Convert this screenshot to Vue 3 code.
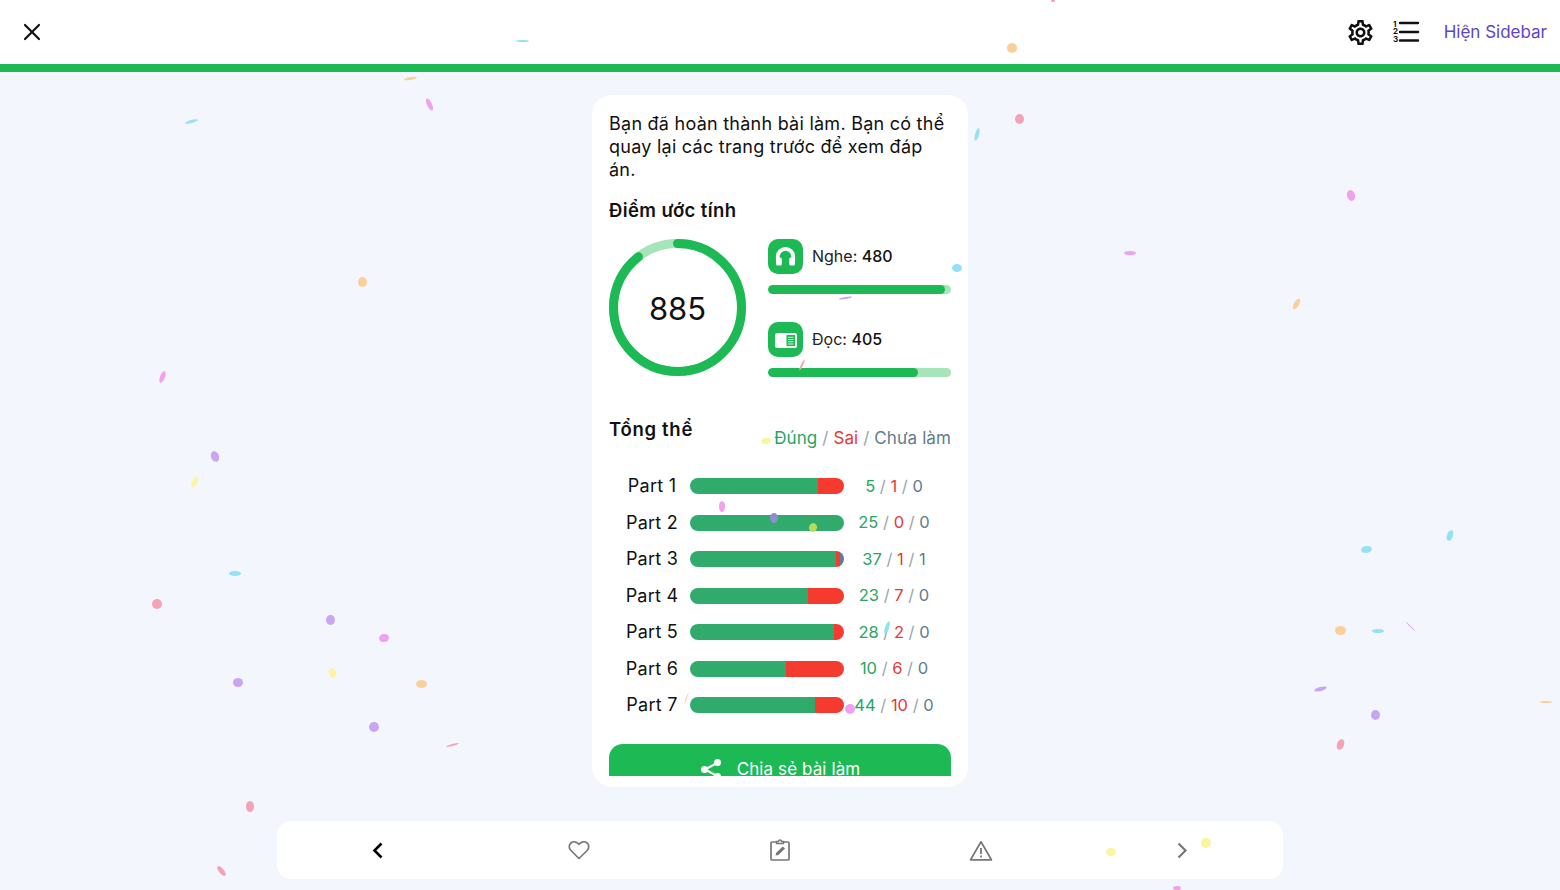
<script setup>
const parts = [
  { name: 'Part 1', c: 5, w: 1, u: 0 },
  { name: 'Part 2', c: 25, w: 0, u: 0 },
  { name: 'Part 3', c: 37, w: 1, u: 1 },
  { name: 'Part 4', c: 23, w: 7, u: 0 },
  { name: 'Part 5', c: 28, w: 2, u: 0 },
  { name: 'Part 6', c: 10, w: 6, u: 0 },
  { name: 'Part 7', c: 44, w: 10, u: 0 }
]
const pct = (v, p) => (v / (p.c + p.w + p.u)) * 100 + '%'

const skills = [
  { label: 'Nghe:', score: 480, icon: 'listen' },
  { label: 'Đọc:', score: 405, icon: 'read' }
]
const circ = 2 * Math.PI * 64
const ringDash = `${circ * (885 / 990)} ${circ}`

const P = '#f5a3b4', V = '#f0a0ee', O = '#fbcf9a', C = '#93e1f5', U = '#c9a5f2', Y = '#fbf59d'
const confetti = [
  [522, 41, 13, 2, 0, C], [1012, 48, 10, 10, 0, O], [1053, 0, 4, 3, 0, P], [410, 78, 13, 3, -10, O],
  [429, 104, 5, 13, -25, V], [191, 121, 13, 3, -15, C], [1019, 119, 9, 10, 0, P], [977, 134, 4, 13, 15, C],
  [1351, 195, 8, 11, -15, V], [1130, 253, 12, 4, 0, V], [957, 268, 10, 8, 0, C], [845, 298, 13, 2, -10, U],
  [362, 282, 9, 10, 0, O], [1296, 304, 5, 12, 30, O], [162, 377, 5, 12, 20, V], [215, 456, 8, 11, -20, U],
  [194, 482, 5, 12, 25, Y], [766, 441, 10, 6, -10, Y], [722, 506, 6, 11, 0, V], [774, 518, 8, 10, 0, '#8f8fd0'],
  [813, 527, 8, 9, 15, '#b5dc5a'], [235, 573, 12, 5, 0, C], [1366, 549, 11, 7, -10, C], [1450, 535, 6, 11, 20, C],
  [157, 604, 10, 10, 0, P], [330, 620, 9, 10, 0, U], [384, 638, 10, 8, -10, V], [1340, 630, 11, 9, 0, O],
  [1378, 631, 12, 4, 0, C], [1410, 626, 13, 1, 45, U], [887, 627, 4, 13, 20, C], [238, 682, 10, 9, 0, U],
  [332, 673, 7, 10, -30, Y], [421, 684, 11, 8, 0, O], [1320, 689, 13, 4, -15, U], [1375, 715, 9, 10, 0, U],
  [1546, 702, 12, 2, 0, O], [374, 727, 10, 10, 0, U], [452, 745, 13, 2, -15, P], [1340, 744, 7, 11, 20, P],
  [850, 709, 10, 10, 0, V], [686, 698, 1, 12, 20, O], [250, 806, 8, 11, 0, P], [221, 871, 5, 12, -40, P],
  [1111, 852, 10, 8, 0, Y], [1206, 843, 10, 10, 0, Y], [1177, 888, 8, 4, 0, V], [802, 365, 2, 12, 25, P]
]
const dotStyle = ([x, y, w, h, r, c]) => ({
  left: x - w / 2 + 'px',
  top: y - h / 2 + 'px',
  width: w + 'px',
  height: h + 'px',
  background: c,
  transform: `rotate(${r}deg)`
})
</script>

<template>
  <div class="page">
    <header class="topbar">
      <button class="icon-btn" aria-label="Đóng">
        <svg width="18" height="18" viewBox="0 0 18 18"><path d="M2 2 16 16M16 2 2 16" stroke="#111" stroke-width="2.2" stroke-linecap="round" fill="none" /></svg>
      </button>
      <div class="top-actions">
        <svg class="gear" width="25" height="25" viewBox="2 2 20 20"><path fill="#111" d="M19.43 12.98c.04-.32.07-.64.07-.98 0-.34-.03-.66-.07-.98l2.11-1.65c.19-.15.24-.42.12-.64l-2-3.46c-.09-.16-.26-.25-.44-.25-.06 0-.12.01-.17.03l-2.49 1c-.52-.4-1.08-.73-1.69-.98l-.38-2.65C14.46 2.18 14.25 2 14 2h-4c-.25 0-.46.18-.49.42l-.38 2.65c-.61.25-1.17.59-1.69.98l-2.49-1c-.06-.02-.12-.03-.18-.03-.17 0-.34.09-.43.25l-2 3.46c-.13.22-.07.49.12.64l2.11 1.65c-.04.32-.07.65-.07.98 0 .33.03.66.07.98l-2.11 1.65c-.19.15-.24.42-.12.64l2 3.46c.09.16.26.25.44.25.06 0 .12-.01.17-.03l2.49-1c.52.4 1.08.73 1.69.98l.38 2.65c.03.24.24.42.49.42h4c.25 0 .46-.18.49-.42l.38-2.65c.61-.25 1.17-.59 1.69-.98l2.49 1c.06.02.12.03.18.03.17 0 .34-.09.43-.25l2-3.46c.12-.22.07-.49-.12-.64l-2.11-1.65zm-1.98-1.71c.04.31.05.52.05.73 0 .21-.02.43-.05.73l-.14 1.13.89.7 1.08.84-.7 1.21-1.27-.51-1.04-.42-.9.68c-.43.32-.84.56-1.25.73l-1.06.43-.16 1.13-.2 1.35h-1.4l-.19-1.35-.16-1.13-1.06-.43c-.43-.18-.83-.41-1.23-.71l-.91-.7-1.06.43-1.27.51-.7-1.21 1.08-.84.89-.7-.14-1.13c-.03-.31-.05-.54-.05-.74s.02-.43.05-.73l.14-1.13-.89-.7-1.08-.84.7-1.21 1.27.51 1.04.42.9-.68c.43-.32.84-.56 1.25-.73l1.06-.43.16-1.13.2-1.35h1.39l.19 1.35.16 1.13 1.06.43c.43.18.83.41 1.23.71l.91.7 1.06-.43 1.27-.51.7 1.21-1.07.85-.89.7.14 1.13zM12 8c-2.21 0-4 1.79-4 4s1.79 4 4 4 4-1.79 4-4-1.79-4-4-4zm0 6c-1.1 0-2-.9-2-2s.9-2 2-2 2 .9 2 2-.9 2-2 2z" /></svg>
        <svg class="list" width="28" height="24" viewBox="0 0 28 24">
          <text x="1" y="6.5" class="list-num">1</text>
          <text x="1" y="14" class="list-num">2</text>
          <text x="1" y="22" class="list-num">3</text>
          <path d="M8 3H26M8 12H26M8 20.500H26" stroke="#111" stroke-width="2.400" stroke-linecap="round" />
        </svg>
        <span class="sidebar-link">Hiện Sidebar</span>
      </div>
    </header>
    <div class="progress"></div>

    <main class="main">
      <section class="card">
        <div class="scroller">
          <p class="intro">Bạn đã hoàn thành bài làm. Bạn có thể<br />quay lại các trang trước để xem đáp<br />án.</p>
          <h2 class="title">Điểm ước tính</h2>
          <div class="scores">
            <div class="ring">
              <svg width="137" height="137" viewBox="0 0 137 137">
                <circle cx="68.500" cy="68.500" r="64" fill="none" stroke="#a6e4b9" stroke-width="9" />
                <circle cx="68.500" cy="68.500" r="64" fill="none" stroke="#1db954" stroke-width="9" stroke-linecap="round" :stroke-dasharray="ringDash" transform="rotate(-90 68.500 68.500)" />
              </svg>
              <span class="ring-value">885</span>
            </div>
            <div class="skills">
              <div v-for="s in skills" :key="s.icon" class="skill">
                <div class="skill-head">
                  <span class="skill-icon">
                    <svg v-if="s.icon === 'listen'" width="35" height="35" viewBox="0 0 35 35">
                      <path d="M9.800 20v-2.500a7.700 7.700 0 0 1 15.400 0V20" fill="none" stroke="#fff" stroke-width="3.800" />
                      <rect x="8" y="18.500" width="5.800" height="8" rx="1.600" fill="#fff" />
                      <rect x="21.200" y="18.500" width="5.800" height="8" rx="1.600" fill="#fff" />
                    </svg>
                    <svg v-else width="35" height="35" viewBox="0 0 35 35">
                      <rect x="7" y="11" width="22" height="15" rx="2" fill="#fff" />
                      <rect x="18.500" y="13" width="8.500" height="11" fill="#1db954" />
                      <path d="M20 15.200h5.500M20 17.500h5.500M20 19.800h5.500M20 22h5.500" stroke="#cdf0d8" stroke-width="1.100" />
                    </svg>
                  </span>
                  <span class="skill-text">{{ s.label }} <b>{{ s.score }}</b></span>
                </div>
                <div class="skill-track"><div class="skill-fill" :style="{ width: (s.score / 495) * 100 + '%' }"></div></div>
              </div>
            </div>
          </div>

          <div class="overall-head">
            <h2 class="title overall">Tổng thể</h2>
            <div class="legend"><span class="g">Đúng</span> <i>/</i> <span class="r">Sai</span> <i>/</i> <span class="s">Chưa làm</span></div>
          </div>

          <div class="parts">
            <div v-for="p in parts" :key="p.name" class="part">
              <span class="part-name">{{ p.name }}</span>
              <div class="part-bar">
                <div class="seg seg-c" :style="{ width: pct(p.c, p) }"></div>
                <div class="seg seg-w" :style="{ width: pct(p.w, p) }"></div>
                <div class="seg seg-u" :style="{ width: pct(p.u, p) }"></div>
              </div>
              <span class="part-stat"><span class="g">{{ p.c }}</span> <i>/</i> <span class="r">{{ p.w }}</span> <i>/</i> <span class="s">{{ p.u }}</span></span>
            </div>
          </div>

          <button class="share">
            <svg width="22" height="22" viewBox="0 0 22 22">
              <path d="M17 5 5 11.500 17 18" fill="none" stroke="#fff" stroke-width="2.200" />
              <circle cx="17.500" cy="4.500" r="3.500" fill="#fff" /><circle cx="4.500" cy="11.500" r="3.500" fill="#fff" /><circle cx="17.500" cy="18.500" r="3.500" fill="#fff" />
            </svg>
            <span>Chia sẻ bài làm</span>
          </button>
        </div>
      </section>
    </main>

    <nav class="nav">
      <span class="nav-item">
        <svg width="12" height="17" viewBox="0 0 12 17"><path d="M9.500 1.500 2.500 8.500l7 7" fill="none" stroke="#000" stroke-width="2.600" /></svg>
      </span>
      <span class="nav-item">
        <svg width="22" height="20" viewBox="0 0 22 20"><path d="M11 18.500 2.900 10.500C.6 8.200.8 4.900 2.900 3c2.300-2 5.800-1.600 8.100 1.300C13.300 1.400 16.800 1 19.100 3c2.100 1.900 2.300 5.200 0 7.500Z" fill="none" stroke="#777" stroke-width="1.700" stroke-linejoin="round" /></svg>
      </span>
      <span class="nav-item">
        <svg width="20" height="22" viewBox="0 0 20 22">
          <path d="M6.500 3H2a1 1 0 0 0-1 1v16a1 1 0 0 0 1 1h16a1 1 0 0 0 1-1V4a1 1 0 0 0-1-1h-4.500" fill="none" stroke="#777" stroke-width="1.700" />
          <path d="M6.500 4.500V2.500H8.500a1.500 1.500 0 0 1 3 0h2V4.500Z" fill="none" stroke="#777" stroke-width="1.400" />
          <path d="M5.500 16.500 6.200 13.800 12.800 7.500 15 9.600 8.400 16Z" fill="#777" />
        </svg>
      </span>
      <span class="nav-item">
        <svg width="24" height="21" viewBox="0 0 24 21">
          <path d="M12 1.800 1.600 19.800H22.400Z" fill="none" stroke="#777" stroke-width="1.700" stroke-linejoin="round" />
          <path d="M12 8v6M12 15.500v2" stroke="#777" stroke-width="1.800" />
        </svg>
      </span>
      <span class="nav-item">
        <svg width="12" height="17" viewBox="0 0 12 17"><path d="M2.500 1.500l7 7-7 7" fill="none" stroke="#777" stroke-width="2.200" /></svg>
      </span>
    </nav>

    <div class="confetti" aria-hidden="true">
      <span v-for="(d, i) in confetti" :key="i" class="dot" :style="dotStyle(d)"></span>
    </div>
  </div>
</template>

<style>
html, body { margin: 0; background: #f3f6fc; }
</style>

<style scoped>
.page {
  position: relative;
  height: 890px;
  overflow: hidden;
  background: #f3f6fc;
  font-family: Inter, "Noto Sans", sans-serif;
  color: #111;
  display: flex;
  flex-direction: column;
}
.topbar {
  height: 64px;
  background: #fff;
  display: flex;
  align-items: center;
  justify-content: space-between;
  padding: 0 13px 0 23px;
  flex: none;
}
.icon-btn { border: 0; padding: 0; background: none; display: flex; }
.top-actions { display: flex; align-items: center; }
.gear { display: block; }
.list { display: block; margin-left: 19px; }
.list-num { font: 700 8px Inter, sans-serif; fill: #111; }
.sidebar-link { margin-left: 24px; font-size: 17px; color: #5b45c8; }
.progress { height: 8px; background: #1db954; flex: none; }

.main { display: flex; justify-content: center; padding-top: 23px; flex: none; }
.card {
  width: 376px;
  height: 692px;
  box-sizing: border-box;
  background: #fff;
  border-radius: 20px;
  padding: 17px 17px 11px;
}
.scroller { height: 664px; overflow: hidden; }
.intro { margin: 0; font-size: 18px; line-height: 23px; letter-spacing: .25px; }
.title { margin: 17px 0 0; font-size: 18.500px; line-height: 24px; font-weight: 600; letter-spacing: .4px; }
.scores { display: flex; gap: 22px; margin-top: 17px; }
.ring { position: relative; width: 137px; height: 137px; flex: none; display: flex; align-items: center; justify-content: center; }
.ring svg { position: absolute; inset: 0; }
.ring-value { font-size: 31px; font-weight: 400; position: relative; margin-top: 2px; }
.skills { flex: 1; display: flex; flex-direction: column; gap: 28px; }
.skill-head { display: flex; align-items: center; gap: 9px; height: 35px; }
.skill-icon { width: 35px; height: 35px; border-radius: 10px; background: #1db954; display: block; }
.skill-icon svg { display: block; }
.skill-text { font-size: 16px; color: #222; margin-bottom: 2px; }
.skill-text b { font-weight: 500; color: #111; }
.skill-track { height: 9px; border-radius: 5px; background: #a6e4b9; margin-top: 11px; overflow: hidden; }
.skill-fill { height: 100%; border-radius: 5px; background: #1db954; }

.overall-head { display: flex; justify-content: space-between; align-items: flex-end; height: 32px; margin-top: 41px; }
.overall { margin: 0 0 9px; letter-spacing: .7px; }
.legend { font-size: 17px; line-height: 22px; color: #888; margin-bottom: 1px; letter-spacing: .1px; }
i { font-style: normal; color: #9aa5ad; }
.g { color: #27a563; }
.r { color: #e53935; }
.s { color: #607d8b; }

.parts { margin-top: 18px; padding-left: 9px; display: grid; grid-auto-rows: 36.500px; }
.part { display: grid; grid-template-columns: 68px 154px 100px; column-gap: 4px; align-items: center; }
.part-name { text-align: center; font-size: 18px; letter-spacing: .25px; color: #111; margin-bottom: 1px; }
.part-bar { display: flex; height: 16px; border-radius: 8px; overflow: hidden; width: 154px; }
.part-stat { text-align: center; font-size: 16.500px; margin-left: -8px; margin-bottom: 1px; }
.seg { height: 100%; }
.seg-c { background: #31ab6c; }
.seg-w { background: #f53b2f; }
.seg-u { background: #607d9b; }

.share {
  margin-top: 20.500px;
  width: 100%;
  height: 50px;
  border: 0;
  border-radius: 14px;
  background: #1db954;
  color: #fff;
  font-family: inherit;
  font-size: 17px;
  letter-spacing: .1px;
  display: flex;
  align-items: center;
  justify-content: center;
  gap: 15px;
}
.share svg { display: block; }

.nav {
  margin: 34px auto 0;
  width: 1006px;
  height: 58px;
  background: #fff;
  border-radius: 14px;
  display: grid;
  grid-template-columns: repeat(5, 1fr);
  flex: none;
}
.nav-item { display: flex; align-items: center; justify-content: center; }
.nav-item svg { display: block; }

.confetti { position: absolute; inset: 0; pointer-events: none; }
.dot { position: absolute; border-radius: 50%; }
</style>
